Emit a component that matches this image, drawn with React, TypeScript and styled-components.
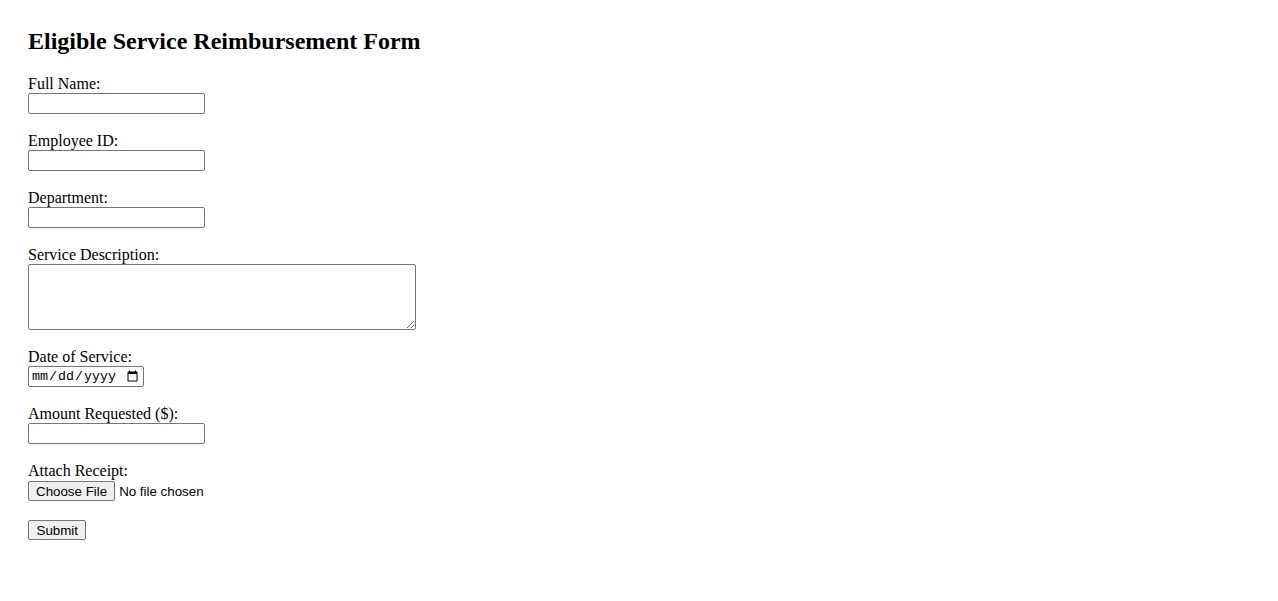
import styled, { createGlobalStyle } from "styled-components";

const GlobalStyle = createGlobalStyle`
    body {
        margin: 0;
        background: #ffffff;
        color: #000000;
        font-family: "Liberation Serif", "Times New Roman", serif;
        font-size: 16px;
    }
`;

const Page = styled.div`
    padding: 28px 28px 40px;
`;

const Title = styled.h2`
    margin: 0 0 20px;
    font-size: 24px;
    font-weight: bold;
    line-height: normal;
`;

const Form = styled.form`
    display: flex;
    flex-direction: column;
    align-items: flex-start;
`;

const Field = styled.div`
    display: flex;
    flex-direction: column;
    align-items: flex-start;
    margin-bottom: 18px;
`;

const Label = styled.label`
    display: block;
    line-height: 18px;
`;

const TextInput = styled.input`
    box-sizing: border-box;
    width: 177px;
    height: 21px;
    margin: 0;
    padding: 1px 2px;
    border: 1px solid #767676;
    border-radius: 2px;
    font-family: "Liberation Sans", Arial, sans-serif;
    font-size: 13.33px;
`;

const DateInput = styled(TextInput)`
    width: 116px;
    font-family: "Liberation Mono", "Courier New", monospace;
`;

const TextArea = styled.textarea`
    box-sizing: border-box;
    width: 388px;
    height: 66px;
    margin: 0;
    padding: 2px;
    border: 1px solid #767676;
    border-radius: 2px;
    font-family: "Liberation Mono", monospace;
    font-size: 13.33px;
`;

const FileInput = styled.input`
    margin: 1px 0 0;
    font-family: "Liberation Sans", Arial, sans-serif;
    font-size: 13.33px;
    height: 20px;
    &::file-selector-button {
        font-family: "Liberation Sans", Arial, sans-serif;
        font-size: 13.33px;
        height: 20px;
        padding: 1px 7px;
        margin-right: 4px;
        background: #efefef;
        border: 1px solid #767676;
        border-radius: 2px;
    }
`;

const SubmitButton = styled.button`
    box-sizing: border-box;
    height: 20px;
    padding: 1px 7.5px;
    margin: 1px 0 0;
    background: #efefef;
    border: 1px solid #767676;
    border-radius: 2px;
    font-family: "Liberation Sans", Arial, sans-serif;
    font-size: 13.33px;
    color: #000;
`;

export default function App() {
    return (
        <>
            <GlobalStyle />
            <Page>
                <Title>Eligible Service Reimbursement Form</Title>
                <Form onSubmit={(e) => e.preventDefault()}>
                    <Field>
                        <Label htmlFor="fullName">Full Name:</Label>
                        <TextInput id="fullName" type="text" />
                    </Field>
                    <Field>
                        <Label htmlFor="employeeId">Employee ID:</Label>
                        <TextInput id="employeeId" type="text" />
                    </Field>
                    <Field>
                        <Label htmlFor="department">Department:</Label>
                        <TextInput id="department" type="text" />
                    </Field>
                    <Field>
                        <Label htmlFor="description">Service Description:</Label>
                        <TextArea id="description" />
                    </Field>
                    <Field>
                        <Label htmlFor="serviceDate">Date of Service:</Label>
                        <DateInput id="serviceDate" type="date" />
                    </Field>
                    <Field>
                        <Label htmlFor="amount">Amount Requested ($):</Label>
                        <TextInput id="amount" type="number" />
                    </Field>
                    <Field>
                        <Label htmlFor="receipt">Attach Receipt:</Label>
                        <FileInput id="receipt" type="file" />
                    </Field>
                    <SubmitButton type="submit">Submit</SubmitButton>
                </Form>
            </Page>
        </>
    );
}
